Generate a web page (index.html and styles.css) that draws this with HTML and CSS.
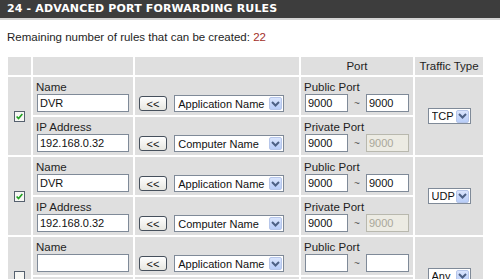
FILE: index.html
```html
<!DOCTYPE html>
<html lang="en">
<head>
    <meta charset="UTF-8">
    <title>Advanced Port Forwarding</title>
    <link rel="stylesheet" href="styles.css">
</head>
<body>
    <div class="titlebar">
        <h2>24 - ADVANCED PORT FORWARDING RULES</h2>
    </div>

    <p class="remaining">Remaining number of rules that can be created: <span class="count">22</span></p>

    <table class="rules">
        <colgroup>
            <col class="w-check"><col class="w-name"><col class="w-pick"><col class="w-port"><col class="w-type">
        </colgroup>
        <tr class="head">
            <td></td><td></td><td></td><td>Port</td><td>Traffic Type</td>
        </tr>

        <!-- rule 1 -->
        <tr>
            <td class="c-check" rowspan="2">
                <span class="check"><svg viewBox="0 0 11 11" width="9" height="9"><path d="M2 5.5 L4.3 8 L9 2.5" fill="none" stroke="#21a121" stroke-width="2"/></svg></span>
            </td>
            <td class="c-name"><label>Name</label><input class="txt name" type="text" value="DVR"></td>
            <td class="c-pick">
                <button class="xp">&lt;&lt;</button>
                <span class="select app"><select><option>Application Name</option></select><span class="arrow"><svg viewBox="0 0 9 6" width="9" height="6"><path d="M1 1 L4.5 4.5 L8 1" fill="none" stroke="#4d6185" stroke-width="2"/></svg></span></span>
            </td>
            <td class="c-port">
                <label>Public Port</label>
                <div class="range"><input class="txt port" type="text" value="9000"><span class="tilde">~</span><input class="txt port" type="text" value="9000"></div>
            </td>
            <td class="c-type" rowspan="2">
                <span class="select proto"><select><option>TCP</option></select><span class="arrow"><svg viewBox="0 0 9 6" width="9" height="6"><path d="M1 1 L4.5 4.5 L8 1" fill="none" stroke="#4d6185" stroke-width="2"/></svg></span></span>
            </td>
        </tr>
        <tr>
            <td class="c-name"><label>IP Address</label><input class="txt name" type="text" value="192.168.0.32"></td>
            <td class="c-pick">
                <button class="xp">&lt;&lt;</button>
                <span class="select app"><select><option>Computer Name</option></select><span class="arrow"><svg viewBox="0 0 9 6" width="9" height="6"><path d="M1 1 L4.5 4.5 L8 1" fill="none" stroke="#4d6185" stroke-width="2"/></svg></span></span>
            </td>
            <td class="c-port">
                <label>Private Port</label>
                <div class="range"><input class="txt port" type="text" value="9000"><span class="tilde">~</span><input class="txt port" type="text" value="9000" disabled></div>
            </td>
        </tr>

        <!-- rule 2 -->
        <tr>
            <td class="c-check" rowspan="2">
                <span class="check"><svg viewBox="0 0 11 11" width="9" height="9"><path d="M2 5.5 L4.3 8 L9 2.5" fill="none" stroke="#21a121" stroke-width="2"/></svg></span>
            </td>
            <td class="c-name"><label>Name</label><input class="txt name" type="text" value="DVR"></td>
            <td class="c-pick">
                <button class="xp">&lt;&lt;</button>
                <span class="select app"><select><option>Application Name</option></select><span class="arrow"><svg viewBox="0 0 9 6" width="9" height="6"><path d="M1 1 L4.5 4.5 L8 1" fill="none" stroke="#4d6185" stroke-width="2"/></svg></span></span>
            </td>
            <td class="c-port">
                <label>Public Port</label>
                <div class="range"><input class="txt port" type="text" value="9000"><span class="tilde">~</span><input class="txt port" type="text" value="9000"></div>
            </td>
            <td class="c-type" rowspan="2">
                <span class="select proto"><select><option>UDP</option></select><span class="arrow"><svg viewBox="0 0 9 6" width="9" height="6"><path d="M1 1 L4.5 4.5 L8 1" fill="none" stroke="#4d6185" stroke-width="2"/></svg></span></span>
            </td>
        </tr>
        <tr>
            <td class="c-name"><label>IP Address</label><input class="txt name" type="text" value="192.168.0.32"></td>
            <td class="c-pick">
                <button class="xp">&lt;&lt;</button>
                <span class="select app"><select><option>Computer Name</option></select><span class="arrow"><svg viewBox="0 0 9 6" width="9" height="6"><path d="M1 1 L4.5 4.5 L8 1" fill="none" stroke="#4d6185" stroke-width="2"/></svg></span></span>
            </td>
            <td class="c-port">
                <label>Private Port</label>
                <div class="range"><input class="txt port" type="text" value="9000"><span class="tilde">~</span><input class="txt port" type="text" value="9000" disabled></div>
            </td>
        </tr>

        <!-- rule 3 (empty) -->
        <tr>
            <td class="c-check" rowspan="2"><span class="check"></span></td>
            <td class="c-name"><label>Name</label><input class="txt name" type="text" value=""></td>
            <td class="c-pick">
                <button class="xp">&lt;&lt;</button>
                <span class="select app"><select><option>Application Name</option></select><span class="arrow"><svg viewBox="0 0 9 6" width="9" height="6"><path d="M1 1 L4.5 4.5 L8 1" fill="none" stroke="#4d6185" stroke-width="2"/></svg></span></span>
            </td>
            <td class="c-port">
                <label>Public Port</label>
                <div class="range"><input class="txt port" type="text" value=""><span class="tilde">~</span><input class="txt port" type="text" value=""></div>
            </td>
            <td class="c-type" rowspan="2">
                <span class="select proto"><select><option>Any</option></select><span class="arrow"><svg viewBox="0 0 9 6" width="9" height="6"><path d="M1 1 L4.5 4.5 L8 1" fill="none" stroke="#4d6185" stroke-width="2"/></svg></span></span>
            </td>
        </tr>
        <tr>
            <td class="c-name"><label>IP Address</label><input class="txt name" type="text" value=""></td>
            <td class="c-pick">
                <button class="xp">&lt;&lt;</button>
                <span class="select app"><select><option>Computer Name</option></select><span class="arrow"><svg viewBox="0 0 9 6" width="9" height="6"><path d="M1 1 L4.5 4.5 L8 1" fill="none" stroke="#4d6185" stroke-width="2"/></svg></span></span>
            </td>
            <td class="c-port">
                <label>Private Port</label>
                <div class="range"><input class="txt port" type="text" value=""><span class="tilde">~</span><input class="txt port" type="text" value="" disabled></div>
            </td>
        </tr>
    </table>
</body>
</html>
```

FILE: styles.css
```css
body {
    margin: 0;
    background-color: #ffffff;
    font-family: "Liberation Sans", Arial, sans-serif;
    font-size: 11.5px;
    color: #1e1e1e;
}
.titlebar {
    background-color: #3d3d3d;
    border-bottom: 2px solid #d4d4d4;
    height: 18px;
    padding-left: 7px;
}
.titlebar h2 {
    margin: 0;
    font-family: "DejaVu Sans", Verdana, sans-serif;
    font-size: 11px;
    font-weight: bold;
    line-height: 18px;
    color: #ffffff;
    letter-spacing: 0.15px;
}
.remaining {
    margin: 10px 0 0 7px;
    line-height: 14px;
}
.count {
    color: #a3302a;
}

/* rules table */
.rules {
    margin: 11px 0 0 6px;
    border-collapse: separate;
    border-spacing: 2px;
    table-layout: fixed;
    width: 479px;
}
.w-check { width: 23px; }
.w-name { width: 100px; }
.w-pick { width: 164px; }
.w-port { width: 112px; }
.w-type { width: 68px; }
.rules td {
    background-color: #dfdfdf;
    padding: 3px 0 3px 0;
    vertical-align: top;
}
.rules .head td {
    height: 18px;
    padding: 0;
    line-height: 18px;
    text-align: center;
    vertical-align: middle;
}
.rules label {
    display: block;
    line-height: 14px;
    height: 14px;
    white-space: nowrap;
}
.c-check {
    text-align: center;
    vertical-align: middle !important;
}
.c-name {
    padding-left: 3px !important;
}
.c-name .txt {
    margin-left: 1px;
}
.c-pick {
    padding-top: 17px !important;
    padding-left: 4px !important;
    line-height: 17px;
    white-space: nowrap;
}
.c-port {
    padding-left: 3px !important;
}
.c-type {
    text-align: center;
    vertical-align: middle !important;
}

/* controls */
.check {
    display: inline-flex;
    align-items: center;
    justify-content: center;
    width: 9px;
    height: 9px;
    border: 1px solid #55606e;
    background-color: #f7f7f4;
    vertical-align: middle;
}
.txt {
    display: block;
    box-sizing: border-box;
    height: 18px;
    border: 1px solid #7f8a98;
    padding: 0 2px;
    font-family: inherit;
    font-size: 11px;
    color: #111111;
    background-color: #ffffff;
}
.txt.name {
    width: 92px;
}
.txt.port {
    width: 43px;
}
.txt:disabled {
    background-color: #ecebe3;
    border-color: #b8b8ae;
    color: #a9a79a;
}
.range {
    display: flex;
    align-items: center;
    margin-left: 1px;
}
.tilde {
    width: 18px;
    text-align: center;
    color: #555555;
    font-size: 10px;
}
.xp {
    display: inline-block;
    box-sizing: border-box;
    width: 28px;
    height: 15px;
    margin-top: 2px;
    padding: 0;
    border: 1px solid #46505c;
    border-radius: 3px;
    background: linear-gradient(#ffffff, #e6e6e0);
    font-family: inherit;
    font-size: 11px;
    line-height: 12px;
    color: #111111;
    vertical-align: top;
}
.select {
    display: inline-flex;
    align-items: center;
    box-sizing: border-box;
    height: 17px;
    border: 1px solid #7f8a98;
    background-color: #ffffff;
    vertical-align: top;
    line-height: normal;
}
.select.app {
    width: 110px;
    margin-top: 1px;
    margin-left: 4px;
}
.select.proto {
    width: 43px;
    height: 16px;
}
.select select {
    flex: 1;
    min-width: 0;
    appearance: none;
    -webkit-appearance: none;
    border: none;
    background: transparent;
    padding: 0 0 0 3px;
    font-family: inherit;
    font-size: 11px;
    color: #111111;
    outline: none;
}
.arrow {
    display: flex;
    align-items: center;
    justify-content: center;
    box-sizing: border-box;
    width: 13px;
    height: 13px;
    margin-right: 1px;
    border: 1px solid #b6c6ea;
    border-radius: 2px;
    background: linear-gradient(#dae5fd, #b8cdf8);
}
```
